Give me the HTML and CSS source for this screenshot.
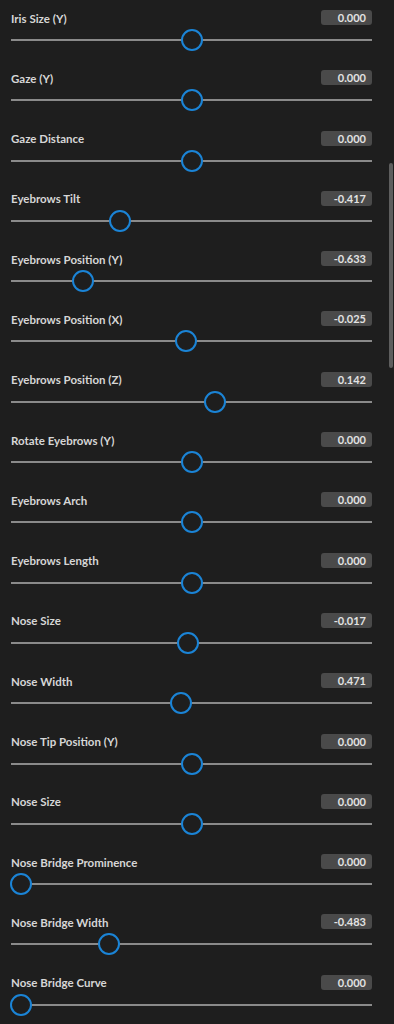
FILE: index.html
```html
<!DOCTYPE html>
<html lang="en">
  <head>
    <meta charset="UTF-8" />
    <meta name="viewport" content="width=device-width, initial-scale=1.0" />
    <title>Face Sliders</title>
    <link rel="stylesheet" href="styles.css">
  </head>
  <body>
    <div class="panel">
      <div class="row">
        <div class="head"><span class="label">Iris Size (Y)</span><span class="value">0.000</span></div>
        <div class="slider"><div class="track"></div><div class="travel"><span class="thumb" style="left:50%"></span></div></div>
      </div>
      <div class="row">
        <div class="head"><span class="label">Gaze (Y)</span><span class="value">0.000</span></div>
        <div class="slider"><div class="track"></div><div class="travel"><span class="thumb" style="left:50%"></span></div></div>
      </div>
      <div class="row">
        <div class="head"><span class="label">Gaze Distance</span><span class="value">0.000</span></div>
        <div class="slider"><div class="track"></div><div class="travel"><span class="thumb" style="left:50%"></span></div></div>
      </div>
      <div class="row">
        <div class="head"><span class="label">Eyebrows Tilt</span><span class="value">-0.417</span></div>
        <div class="slider"><div class="track"></div><div class="travel"><span class="thumb" style="left:29%"></span></div></div>
      </div>
      <div class="row">
        <div class="head"><span class="label">Eyebrows Position (Y)</span><span class="value">-0.633</span></div>
        <div class="slider"><div class="track"></div><div class="travel"><span class="thumb" style="left:18.2%"></span></div></div>
      </div>
      <div class="row">
        <div class="head"><span class="label">Eyebrows Position (X)</span><span class="value">-0.025</span></div>
        <div class="slider"><div class="track"></div><div class="travel"><span class="thumb" style="left:48.4%"></span></div></div>
      </div>
      <div class="row">
        <div class="head"><span class="label">Eyebrows Position (Z)</span><span class="value">0.142</span></div>
        <div class="slider"><div class="track"></div><div class="travel"><span class="thumb" style="left:56.9%"></span></div></div>
      </div>
      <div class="row">
        <div class="head"><span class="label">Rotate Eyebrows (Y)</span><span class="value">0.000</span></div>
        <div class="slider"><div class="track"></div><div class="travel"><span class="thumb" style="left:50%"></span></div></div>
      </div>
      <div class="row">
        <div class="head"><span class="label">Eyebrows Arch</span><span class="value">0.000</span></div>
        <div class="slider"><div class="track"></div><div class="travel"><span class="thumb" style="left:50%"></span></div></div>
      </div>
      <div class="row">
        <div class="head"><span class="label">Eyebrows Length</span><span class="value">0.000</span></div>
        <div class="slider"><div class="track"></div><div class="travel"><span class="thumb" style="left:50%"></span></div></div>
      </div>
      <div class="row">
        <div class="head"><span class="label">Nose Size</span><span class="value">-0.017</span></div>
        <div class="slider"><div class="track"></div><div class="travel"><span class="thumb" style="left:49%"></span></div></div>
      </div>
      <div class="row">
        <div class="head"><span class="label">Nose Width</span><span class="value">0.471</span></div>
        <div class="slider"><div class="track"></div><div class="travel"><span class="thumb" style="left:46.9%"></span></div></div>
      </div>
      <div class="row">
        <div class="head"><span class="label">Nose Tip Position (Y)</span><span class="value">0.000</span></div>
        <div class="slider"><div class="track"></div><div class="travel"><span class="thumb" style="left:50%"></span></div></div>
      </div>
      <div class="row">
        <div class="head"><span class="label">Nose Size</span><span class="value">0.000</span></div>
        <div class="slider"><div class="track"></div><div class="travel"><span class="thumb" style="left:50%"></span></div></div>
      </div>
      <div class="row">
        <div class="head"><span class="label">Nose Bridge Prominence</span><span class="value">0.000</span></div>
        <div class="slider"><div class="track"></div><div class="travel"><span class="thumb" style="left:0%"></span></div></div>
      </div>
      <div class="row">
        <div class="head"><span class="label">Nose Bridge Width</span><span class="value">-0.483</span></div>
        <div class="slider"><div class="track"></div><div class="travel"><span class="thumb" style="left:25.8%"></span></div></div>
      </div>
      <div class="row">
        <div class="head"><span class="label">Nose Bridge Curve</span><span class="value">0.000</span></div>
        <div class="slider"><div class="track"></div><div class="travel"><span class="thumb" style="left:0%"></span></div></div>
      </div>
    </div>
    <div class="scrollbar"></div>
  </body>
</html>
```

FILE: styles.css
```css
* {
  margin: 0;
  padding: 0;
  box-sizing: border-box;
}

body {
  background: #1e1e1e;
  color: #dcdcdc;
  font-family: "Lato", "Open Sans", sans-serif;
  overflow: hidden;
  height: 1024px;
}

.panel {
  padding: 0 22px 0 11px;
}

.row {
  height: 60.3px;
  padding-top: 10px;
}

.head {
  display: flex;
  align-items: center;
  justify-content: space-between;
  height: 15px;
}

.label {
  font-size: 11.5px;
  font-weight: 700;
  color: #d6d6d6;
  padding-top: 1px;
}

.value {
  width: 51px;
  height: 15px;
  line-height: 15px;
  padding-right: 6px;
  text-align: right;
  background: #4a4a4a;
  border-radius: 3px;
  font-size: 11px;
  font-weight: 700;
  color: #e2e2e2;
}

/* slider */
.slider {
  position: relative;
  height: 22px;
  margin-top: 4px;
}

.track {
  position: relative;
  top: 10px;
  height: 2px;
  background: #8a8a8a;
}

.travel {
  position: absolute;
  top: 0;
  bottom: 0;
  left: 10px;
  right: 10px;
}

.thumb {
  position: absolute;
  top: 0;
  width: 22px;
  height: 22px;
  margin-left: -11px;
  border: 2px solid #1b84d6;
  border-radius: 50%;
  background: #1e1e1e;
}

.scrollbar {
  position: absolute;
  top: 163px;
  right: 1px;
  width: 4px;
  height: 205px;
  background: #5e5e5e;
  border-radius: 2px;
}
```
